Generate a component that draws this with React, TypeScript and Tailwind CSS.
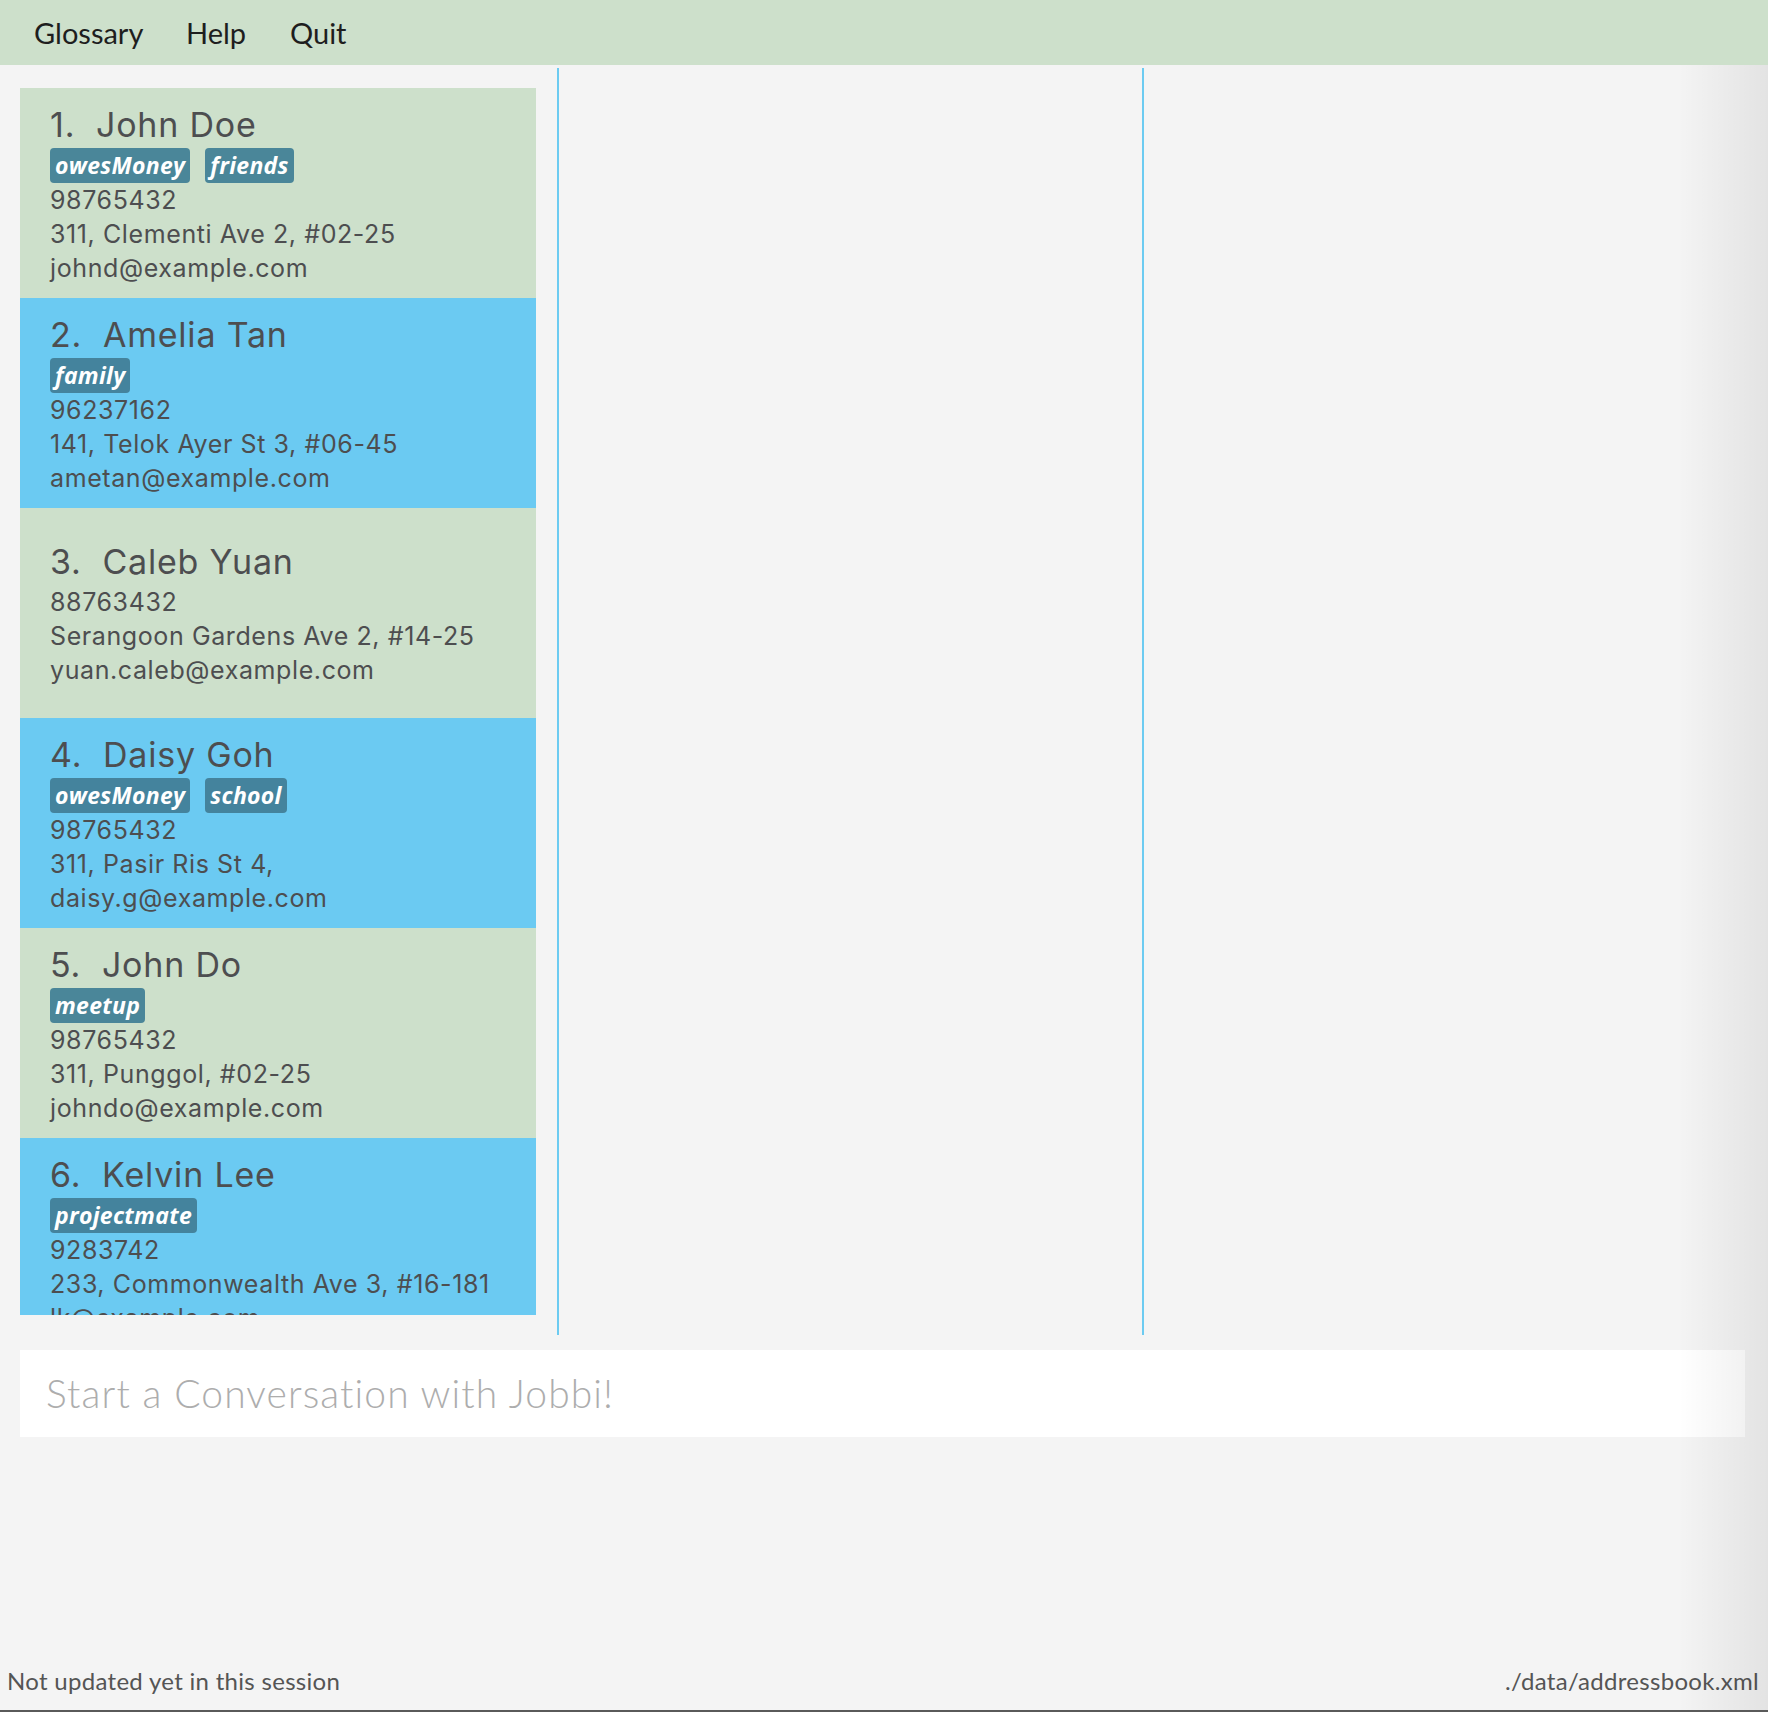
import React from 'react'

interface Person {
  name: string
  tags: string[]
  phone: string
  address: string
  email: string
}

const people: Person[] = [
  { name: 'John Doe', tags: ['owesMoney', 'friends'], phone: '98765432', address: '311, Clementi Ave 2, #02-25', email: 'johnd@example.com' },
  { name: 'Amelia Tan', tags: ['family'], phone: '96237162', address: '141, Telok Ayer St 3, #06-45', email: 'ametan@example.com' },
  { name: 'Caleb Yuan', tags: [], phone: '88763432', address: 'Serangoon Gardens Ave 2, #14-25', email: 'yuan.caleb@example.com' },
  { name: 'Daisy Goh', tags: ['owesMoney', 'school'], phone: '98765432', address: '311, Pasir Ris St 4,', email: 'daisy.g@example.com' },
  { name: 'John Do', tags: ['meetup'], phone: '98765432', address: '311, Punggol, #02-25', email: 'johndo@example.com' },
  { name: 'Kelvin Lee', tags: ['projectmate'], phone: '9283742', address: '233, Commonwealth Ave 3, #16-181', email: 'lk@example.com' },
]

const avenir = { fontFamily: 'Lato, "Open Sans", sans-serif' }

function PersonCard({ person, index }: { person: Person; index: number }) {
  const blue = index % 2 === 1
  return (
    <div
      className={`h-[210px] shrink-0 flex flex-col justify-center pl-[30px] text-[#4d4e50] ${blue ? 'bg-[#6bcaf2]' : 'bg-[#cde0cb]'}`}
      style={{ fontFamily: 'Inter, Roboto, "Liberation Sans", sans-serif' }}
    >
      <div className="h-[46px] flex items-center text-[34px] tracking-[0.8px] leading-none whitespace-pre">
        {index + 1}.  {person.name}
      </div>
      {person.tags.length > 0 && (
        <div className="flex gap-[15px] h-[35px]">
          {person.tags.map(t => (
            <span
              key={t}
              className={`h-[35px] px-[5px] rounded-[4px] flex items-center text-white font-bold italic text-[23px] tracking-[0.3px] ${blue ? 'bg-[#44839d]' : 'bg-[#4a8699]'}`}
              style={{ fontFamily: '"Open Sans", sans-serif' }}
            >
              {t}
            </span>
          ))}
        </div>
      )}
      <div className="text-[25px] leading-[34px] tracking-[0.6px]">{person.phone}</div>
      <div className="text-[25px] leading-[34px] tracking-[0.6px] whitespace-nowrap">{person.address}</div>
      <div className="text-[25px] leading-[34px] tracking-[0.6px]">{person.email}</div>
    </div>
  )
}

export default function App() {
  return (
    <div className="relative w-[1768px] h-[1712px] bg-[#f4f4f4] flex flex-col overflow-hidden border-b-2 border-[#5a5a5a]">

      {/* ── Menu bar ─────────────────────────────── */}
      <div className="h-[65px] shrink-0 bg-[#cde0cb] flex items-center pl-[34px] text-[#1e1e1e] text-[29px]" style={avenir}>
        <span className="w-[152px]">Glossary</span>
        <span className="w-[104px]">Help</span>
        <span>Quit</span>
      </div>

      {/* ── Panels ───────────────────────────────── */}
      <div className="mt-[3px] h-[1267px] shrink-0 flex">
        <div className="w-[557px] shrink-0 pl-[20px] pt-[20px] pb-[20px] pr-[21px]">
          <div className="h-full overflow-hidden flex flex-col">
            {people.map((p, i) => (
              <PersonCard key={i} person={p} index={i} />
            ))}
          </div>
        </div>
        <div className="w-[2px] shrink-0 bg-[#6ccbf1]" />
        <div className="w-[583px] shrink-0" />
        <div className="w-[2px] shrink-0 bg-[#6ccbf1]" />
        <div className="flex-1" />
      </div>

      {/* ── Command box ──────────────────────────── */}
      <div className="mt-[15px] ml-[20px] w-[1725px] h-[87px] bg-white flex items-center pl-[26px]">
        <span className="text-[39px] font-light tracking-[1.1px] text-[#adadad]" style={avenir}>
          Start a Conversation with Jobbi!
        </span>
      </div>

      {/* ── Status bar ───────────────────────────── */}
      <div className="mt-auto h-[58px] flex items-center justify-between pl-[7px] pr-[9px] text-[24px] tracking-[0.3px] text-[#555]" style={avenir}>
        <span>Not updated yet in this session</span>
        <span>./data/addressbook.xml</span>
      </div>

      {/* right edge shadow */}
      <div className="pointer-events-none absolute right-0 top-[65px] bottom-0 w-[90px] bg-linear-to-r from-transparent to-black/[0.07]" />
    </div>
  )
}
